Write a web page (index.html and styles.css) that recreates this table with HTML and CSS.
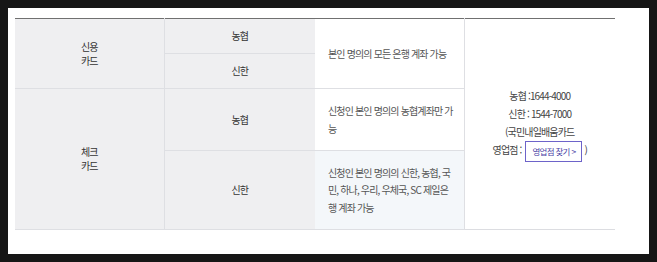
FILE: index.html
```html
<!DOCTYPE html>
<html lang="ko">
<head>
<meta charset="utf-8">
<link rel="stylesheet" href="styles.css">
</head>
<body>
<div class="page">
  <table class="card-table">
    <colgroup>
      <col class="c1"><col class="c2"><col class="c3"><col class="c4">
    </colgroup>
    <tbody>
      <tr class="r1">
        <th rowspan="2" class="kind">신용<br>카드</th>
        <td class="bank">농협</td>
        <td rowspan="2" class="desc">본인 명의의 모든 은행 계좌 가능</td>
        <td rowspan="4" class="contact">
          <p>농협 :1644-4000</p>
          <p>신한 : 1544-7000</p>
          <p>(국민내일배움카드<br>영업점 : <a class="find-btn" href="#">영업점 찾기 &gt;</a> )</p>
        </td>
      </tr>
      <tr class="r2">
        <td class="bank">신한</td>
      </tr>
      <tr class="r3">
        <th rowspan="2" class="kind">체크<br>카드</th>
        <td class="bank">농협</td>
        <td class="desc">신청인 본인 명의의 농협계좌만 가능</td>
      </tr>
      <tr class="r4">
        <td class="bank">신한</td>
        <td class="desc tint">신청인 본인 명의의 신한, 농협, 국민, 하나, 우리, 우체국, SC 제일은행 계좌 가능</td>
      </tr>
    </tbody>
  </table>
</div>
</body>
</html>
```

FILE: styles.css
```css
html {
  background: #161616;
}
body {
  margin: 8px;
  background: #ffffff;
  height: 246px;
  font-family: "Noto Sans CJK KR", "Noto Sans", sans-serif;
  font-size: 10px;
  letter-spacing: -0.85px;
  color: #333;
}
.page {
  padding: 10px 7px 0;
}
.card-table {
  width: 600px;
  border-collapse: collapse;
  table-layout: fixed;
  border-top: 1px solid #707070;
  border-bottom: 1px solid #dcdde1;
}
.c1 { width: 149px; }
.c2 { width: 151px; }
.c3 { width: 149px; }
.c4 { width: 151px; }
.r1 { height: 35px; }
.r2 { height: 35px; }
.r3 { height: 62px; }
.r4 { height: 79px; }
th, td {
  padding: 0;
  vertical-align: middle;
  font-weight: normal;
  line-height: 14px;
}
.kind {
  background: #efeff1;
  border-right: 1px solid #dedfe3;
  border-bottom: 1px solid #dedfe3;
  text-align: center;
  color: #333;
}
.bank {
  background: #efeff1;
  border-bottom: 1px solid #dedfe3;
  text-align: center;
  color: #333;
}
.desc {
  padding: 0 9px 0 13px;
  line-height: 17.5px;
  color: #555;
  word-break: break-all;
  border-bottom: 1px solid #dedfe3;
  background: #fff;
}
.desc.tint {
  background: #f4f7fa;
}
.contact {
  border-left: 1px solid #dedfe3;
  text-align: center;
  color: #444;
  padding: 0 6px;
}
.contact p {
  margin: 0;
  line-height: 18px;
}
.find-btn {
  display: inline-block;
  width: 57px;
  height: 21px;
  box-sizing: border-box;
  border: 1px solid #6d63c9;
  color: #4b3fa6;
  font-size: 8.5px;
  line-height: 19px;
  letter-spacing: -0.7px;
  text-decoration: none;
  text-align: center;
  vertical-align: middle;
  margin-left: 2px;
}
```
